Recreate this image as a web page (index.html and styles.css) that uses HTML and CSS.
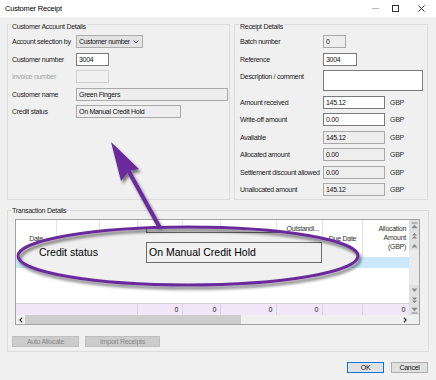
FILE: index.html
```html
<!DOCTYPE html>
<html>
<head>
<meta charset="utf-8">
<title>Customer Receipt</title>
<link rel="stylesheet" href="styles.css">
</head>
<body>
<div class="window">
  <div class="titlebar">
    <span class="title">Customer Receipt</span>
    <div class="controls">
      <span class="ctl min"><span class="min-line"></span></span>
      <span class="ctl max"><span class="max-box"></span></span>
      <span class="ctl close"><svg width="7" height="7" viewBox="0 0 7 7"><path d="M0.5 0.5L6.5 6.5M6.5 0.5L0.5 6.5" stroke="#333" stroke-width="1"/></svg></span>
    </div>
  </div>
  <div class="content">
    <div class="top">
      <div class="group left">
        <span class="legend">Customer Account Details</span>
        <div class="form-left">
          <span class="lbl">Account selection by</span>
          <div class="select"><span class="sel-text">Customer number</span><svg class="chev" width="6" height="4" viewBox="0 0 6 4"><path d="M0.5 0.5L3 3L5.5 0.5" fill="none" stroke="#555" stroke-width="0.9"/></svg></div>
          <span class="lbl">Customer number</span>
          <div class="field w33">3004</div>
          <span class="lbl dis">Invoice number</span>
          <div class="field disabled w33"></div>
          <span class="lbl">Customer name</span>
          <div class="field ro w152">Green Fingers</div>
          <span class="lbl">Credit status</span>
          <div class="field ro w105">On Manual Credit Hold</div>
        </div>
      </div>
      <div class="group right">
        <span class="legend">Receipt Details</span>
        <div class="form-right">
          <span class="lbl">Batch number</span>
          <div class="field ro w23 span2">0</div>
          <span class="lbl">Reference</span>
          <div class="field w34 span2">3004</div>
          <span class="lbl top-lbl">Description / comment</span>
          <div class="field desc span2"></div>
          <span class="lbl">Amount received</span>
          <div class="field w62">145.12</div>
          <span class="gbp">GBP</span>
          <span class="lbl">Write-off amount</span>
          <div class="field w62">0.00</div>
          <span class="gbp">GBP</span>
          <span class="lbl">Available</span>
          <div class="field ro w62">145.12</div>
          <span class="gbp">GBP</span>
          <span class="lbl">Allocated amount</span>
          <div class="field ro w62">0.00</div>
          <span class="gbp">GBP</span>
          <span class="lbl">Settlement discount allowed</span>
          <div class="field ro w62">0.00</div>
          <span class="gbp">GBP</span>
          <span class="lbl">Unallocated amount</span>
          <div class="field ro w62">145.12</div>
          <span class="gbp">GBP</span>
        </div>
      </div>
    </div>

    <div class="group trans">
      <span class="legend tl">Transaction Details</span>
      <div class="table">
        <div class="main">
          <div class="thead cols">
            <div class="th center">Date</div>
            <div class="th left-al">#</div>
            <div class="th"></div>
            <div class="th"></div>
            <div class="th"></div>
            <div class="th"></div>
            <div class="th top-al">Outstandi...</div>
            <div class="th center">Due Date</div>
            <div class="th top-al last">Allocation<br>Amount<br>(GBP)</div>
          </div>
          <div class="selrow"></div>
          <div class="empty"></div>
          <div class="tfoot cols">
            <div class="tf span3"></div>
            <div class="tf">0</div>
            <div class="tf">0</div>
            <div class="tf">0</div>
            <div class="tf">0</div>
            <div class="tf"></div>
            <div class="tf last">0</div>
          </div>
        </div>
        <div class="vscroll">
          <div class="sb"><svg width="7" height="7" viewBox="0 0 7 7"><rect x="0.5" y="0.5" width="6" height="1" fill="#8c8c8c"/><path d="M0.5 6.2L3.5 2.6L6.5 6.2Z" fill="#8c8c8c"/></svg></div>
          <div class="sb"><svg width="7" height="7" viewBox="0 0 7 7"><path d="M1 3.6L3.5 0.8L6 3.6ZM1 6.6L3.5 3.8L6 6.6Z" fill="#8c8c8c"/></svg></div>
          <div class="sb"><svg width="7" height="5" viewBox="0 0 7 5"><path d="M0.5 4.5L3.5 1L6.5 4.5Z" fill="#8c8c8c"/></svg></div>
          <div class="track"></div>
          <div class="sb"><svg width="7" height="5" viewBox="0 0 7 5"><path d="M0.5 0.5L3.5 4L6.5 0.5Z" fill="#8c8c8c"/></svg></div>
          <div class="sb"><svg width="7" height="7" viewBox="0 0 7 7"><path d="M1 0.4L3.5 3.2L6 0.4ZM1 3.4L3.5 6.2L6 3.4Z" fill="#8c8c8c"/></svg></div>
          <div class="sb"><svg width="7" height="7" viewBox="0 0 7 7"><path d="M0.5 0.8L3.5 4.4L6.5 0.8Z" fill="#8c8c8c"/><rect x="0.5" y="5.5" width="6" height="1" fill="#8c8c8c"/></svg></div>
        </div>
        <div class="hscroll">
          <span class="hb"><svg width="4" height="6" viewBox="0 0 4 6"><path d="M3.2 0.6L0.9 3L3.2 5.4" fill="none" stroke="#222" stroke-width="1.1"/></svg></span>
          <div class="htrack"><div class="thumb"></div></div>
          <span class="hb"><svg width="4" height="6" viewBox="0 0 4 6"><path d="M0.8 0.6L3.1 3L0.8 5.4" fill="none" stroke="#222" stroke-width="1.1"/></svg></span>
        </div>
        <div class="corner"></div>
      </div>
      <div class="actions">
        <div class="btn-dis w67">Auto Allocate</div>
        <div class="btn-dis w75">Import Receipts</div>
      </div>
    </div>

    <div class="dialog">
      <div class="btn ok">OK</div>
      <div class="btn">Cancel</div>
    </div>
  </div>

  <div class="callout">
    <div class="co-top"></div>
    <div class="co-row">
      <span class="co-label">Credit status</span>
      <div class="co-box">On Manual Credit Hold</div>
    </div>
  </div>
  <svg class="annot" width="436" height="380" viewBox="0 0 436 380">
    <defs>
      <filter id="sh" x="-10%" y="-20%" width="125%" height="160%">
        <feDropShadow dx="2" dy="3" stdDeviation="1.6" flood-color="#000" flood-opacity="0.5"/>
      </filter>
    </defs>
    <g filter="url(#sh)">
      <ellipse cx="188" cy="256" rx="170" ry="29" fill="none" stroke="#6a2c9c" stroke-width="3"/>
      <line x1="128" y1="170" x2="160" y2="228" stroke="#6a2c9c" stroke-width="4"/>
      <polygon points="111,142 139,169 129,171 121,181" fill="#6a2c9c"/>
    </g>
  </svg>
</div>
</body>
</html>
```
FILE: styles.css
```css
* { box-sizing: border-box; }
html, body { margin: 0; padding: 0; }
body {
  width: 436px;
  height: 380px;
  overflow: hidden;
  background: #f0f0f0;
  font-family: "Liberation Sans", Arial, sans-serif;
  font-size: 7px;
  letter-spacing: -0.28px;
  line-height: 9px;
  color: #1a1a1a;
}
.window { position: relative; width: 436px; height: 380px; }

/* title bar */
.titlebar { height: 17px; background: #fff; display: flex; align-items: center; }
.title { flex: 1; padding-left: 5px; font-size: 7.5px; letter-spacing: -0.2px; color: #000; }
.controls { display: flex; height: 17px; }
.ctl { display: flex; align-items: center; justify-content: center; height: 17px; }
.ctl.min { width: 20px; }
.ctl.max { width: 21px; }
.ctl.close { width: 30px; }
.min-line { width: 7px; height: 1px; background: #b8b8b8; }
.max-box { width: 7px; height: 7px; border: 1px solid #333; }

/* content */
.content { padding: 7px 7px 0 7px; }
.top { display: flex; gap: 4px; height: 176px; }
.group { position: relative; border: 1px solid #dcdcdc; }
.group.left { width: 223px; padding: 10px 4px 0 4px; }
.group.right { width: 194px; padding: 10px 5px 0 5px; }
.legend {
  position: absolute;
  top: -3px;
  left: 3px;
  padding: 0 1px;
  background: #f0f0f0;
  color: #1a1a1a;
}
.group.right .legend { left: 4px; }
.legend.tl { top: -5px; }

.lbl { white-space: nowrap; }
.lbl.dis { color: #a3a3a3; }
.lbl.top-lbl { align-self: start; margin-top: 2px; }

.form-left {
  display: grid;
  grid-template-columns: 64px auto;
  grid-auto-rows: 13px;
  row-gap: 4.5px;
  align-items: center;
  justify-items: start;
}
.form-right {
  display: grid;
  grid-template-columns: 83px 62px auto;
  grid-template-rows: 13px 13px 21px repeat(6, 13px);
  row-gap: 4.5px;
  align-items: center;
  justify-items: start;
}
.span2 { grid-column: 2 / span 2; }
.gbp { padding-left: 5px; color: #333; }

.field {
  height: 13px;
  border: 1px solid #7a7a7a;
  background: #fff;
  padding: 0 2px;
  line-height: 11px;
  white-space: nowrap;
  color: #111;
}
.field.ro { background: #eeeeee; border-color: #a9a9a9; }
.field.disabled { background: #f0f0f0; border-color: #cfcfcf; }
.field.desc { height: 21px; width: 100px; align-self: start; }
.w23 { width: 23px; }
.w33 { width: 33px; }
.w34 { width: 34px; }
.w62 { width: 62px; }
.w105 { width: 105px; }
.w152 { width: 152px; }

.select {
  width: 67px;
  height: 13px;
  border: 1px solid #adadad;
  background: #e3e3e3;
  padding: 0 0 0 2px;
  display: flex;
  align-items: center;
  justify-content: space-between;
  white-space: nowrap;
}
.sel-text { letter-spacing: -0.35px; }
.chev { margin-right: 3px; flex: none; }

/* transaction group */
.group.trans { margin-top: 10px; height: 142px; padding: 8px 0 0 4px; }
.table {
  margin-left: 3px;
  width: 405px;
  height: 106px;
  border: 1px solid #a3a3a3;
  background: #fff;
  display: grid;
  grid-template-columns: 393px 10px;
  grid-template-rows: 95px 9px;
}
.main { display: flex; flex-direction: column; }
.cols {
  display: grid;
  grid-template-columns: 41px 43px 38px 45px 38px 56px 46px 40px 46px;
}
.thead { height: 37px; color: #333; }
.th { border-right: 1px solid #e3e3e3; display: flex; align-items: center; white-space: nowrap; overflow: hidden; }
.th.center { justify-content: center; }
.th.left-al { padding-left: 3px; }
.th.top-al { align-items: flex-start; justify-content: flex-end; text-align: right; padding: 4px 3px 0 0; }
.th.last { border-right: none; }
.selrow { height: 11px; background: #cce8ff; }
.empty { flex: 1; }
.tfoot { height: 12px; background: #f2e7f8; border-top: 1px solid #d6d0da; }
.tf { border-right: 1px solid #dcd2e2; text-align: right; padding-right: 4px; line-height: 11px; color: #222; }
.tf.span3 { grid-column: span 3; }
.tf.last { border-right: none; }

.vscroll { display: flex; flex-direction: column; background: #e6e6e6; }
.sb { height: 10px; display: flex; align-items: center; justify-content: center; background: #e0e0e0; }
.track { flex: 1; background: #ebebeb; }
.hscroll { display: flex; background: #f0f0f0; }
.hb { width: 9px; display: flex; align-items: center; justify-content: center; }
.htrack { flex: 1; }
.thumb { width: 216px; height: 9px; background: #cdcdcd; }
.corner { background: #f0f0f0; }

.actions { display: flex; gap: 6px; margin-top: 11px; }
.btn-dis {
  height: 11px;
  background: #cccccc;
  border: 1px solid #bfbfbf;
  color: #8a8a8a;
  display: flex;
  align-items: center;
  justify-content: center;
}
.w67 { width: 67px; }
.w75 { width: 75px; }

.dialog { display: flex; justify-content: flex-end; gap: 7px; margin-top: 10px; margin-right: 1px; }
.btn {
  width: 37px;
  height: 11px;
  background: #e1e1e1;
  border: 1px solid #adadad;
  display: flex;
  align-items: center;
  justify-content: center;
  color: #111;
}
.btn.ok { border-color: #0078d7; }

/* annotation callout */
.callout {
  position: absolute;
  left: 18px;
  top: 227px;
  width: 340px;
  height: 58px;
  background: #f0f0f0;
  clip-path: ellipse(170px 29px at 170px 29px);
  font-size: 10.5px;
  letter-spacing: 0;
  line-height: 13px;
  color: #000;
}
.co-top { margin: -15px 0 0 128px; width: 176px; height: 21px; border: 1px solid #6d6d6d; }
.co-row { display: flex; align-items: center; margin-top: 9px; padding-left: 21px; }
.co-label { width: 107px; white-space: nowrap; }
.co-box {
  width: 176px;
  height: 21px;
  border: 1px solid #6d6d6d;
  padding-left: 2px;
  display: flex;
  align-items: center;
  white-space: nowrap;
}
.annot { position: absolute; left: 0; top: 0; pointer-events: none; }
```
